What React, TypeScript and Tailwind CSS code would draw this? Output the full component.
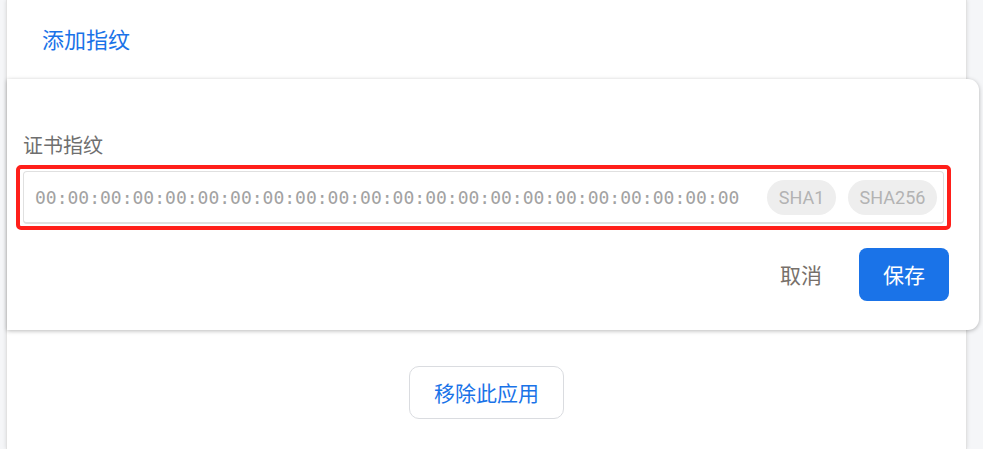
import React from "react";

const cjk = { fontFamily: '"Noto Sans CJK SC", "Noto Sans", sans-serif' };

export default function App() {
  const hex = Array.from({ length: 22 }, () => "00").join(":");
  return (
    <div className="w-[983px] h-[449px] bg-[#f5f6f8] overflow-hidden" style={cjk}>
      <div className="ml-[6px] w-[961px] h-[449px] bg-white border-l border-r border-[#e2e2e2] shadow-[0_0_4px_rgba(0,0,0,0.12)]">
        <div className="h-[79px] pl-[35px] flex items-center text-[#1a73e8] text-[22px] leading-none pb-[3px]">
          添加指纹
        </div>
        <div className="w-[972px] h-[251px] bg-white rounded-r-[11px] shadow-[0_1px_4px_rgba(0,0,0,0.28)] flex flex-col">
          <div className="pl-[16px] pt-[55px] h-[86px] text-[20px] leading-[22px] text-[#6f6f6f]">证书指纹</div>
          <div className="ml-[9px] w-[935px] h-[65px] border-4 border-[#ff1f1a] rounded-[5px] pt-[2px] px-[3px]">
            <div className="h-[53px] border border-[#e0e0e0] border-b-2 rounded-[4px] flex items-center pl-[11px] pr-[6px]">
              <span
                className="flex-1 text-[18px] text-[#a2a2a2] whitespace-nowrap"
                style={{ fontFamily: '"DejaVu Sans Mono", "Liberation Mono", monospace' }}
              >
                {hex}
              </span>
              <div className="flex gap-[12px]" style={{ fontFamily: "Roboto, sans-serif" }}>
                <span className="h-[35px] w-[69px] rounded-full bg-[#eeeeee] text-[#b3b3b3] text-[18px] flex items-center justify-center">
                  SHA1
                </span>
                <span className="h-[35px] w-[89px] rounded-full bg-[#eeeeee] text-[#b3b3b3] text-[18px] flex items-center justify-center">
                  SHA256
                </span>
              </div>
            </div>
          </div>
          <div className="flex justify-end items-center gap-[20px] pr-[30px] mt-[18px]">
            <button className="h-[53px] px-[17px] text-[21px] text-[#77706a]">取消</button>
            <button className="h-[53px] w-[90px] rounded-[8px] bg-[#1a73e8] text-white text-[21px]">保存</button>
          </div>
        </div>
        <div className="flex justify-center pt-[36px]">
          <button className="h-[53px] w-[155px] rounded-[10px] border border-[#dadce0] text-[#1a73e8] text-[21px]">
            移除此应用
          </button>
        </div>
      </div>
    </div>
  );
}
